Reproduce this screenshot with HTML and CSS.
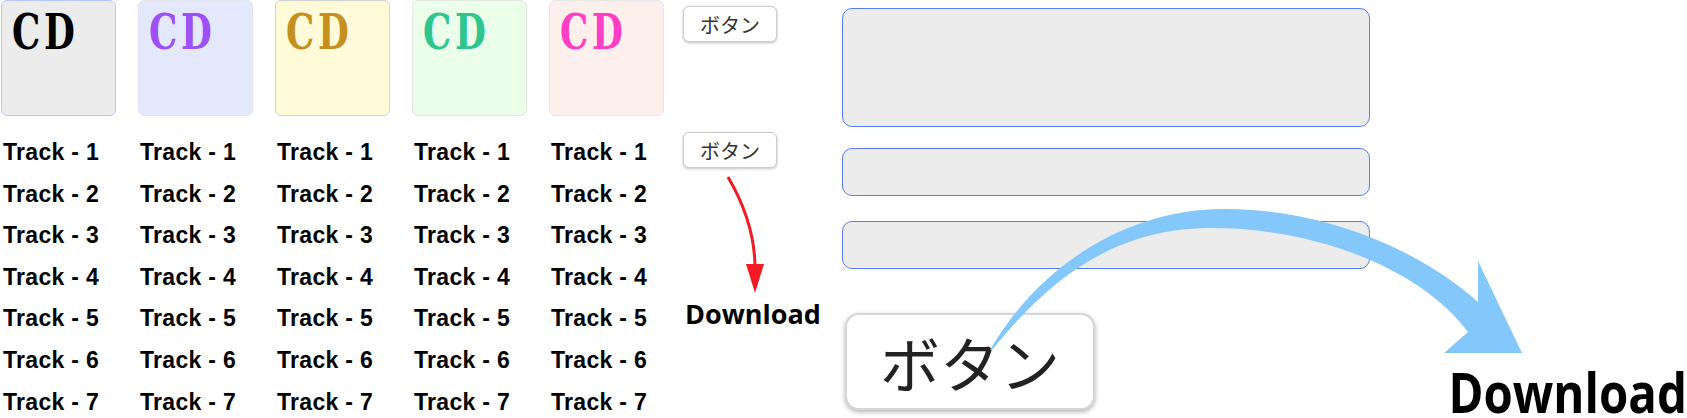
FILE: index.html
```html
<!DOCTYPE html>
<html lang="ja">
<head>
    <meta charset="UTF-8">
    <meta name="viewport" content="width=device-width, initial-scale=1.0">
    <title>CD Tracks</title>
    <link rel="stylesheet" href="styles.css">
</head>
<body>
    <div class="cd-list">
        <div class="cd">
            <div class="jacket jacket-gray"><span class="cd-label">CD</span></div>
            <ul class="tracks">
                <li>Track - 1</li><li>Track - 2</li><li>Track - 3</li><li>Track - 4</li><li>Track - 5</li><li>Track - 6</li><li>Track - 7</li>
            </ul>
        </div>
        <div class="cd">
            <div class="jacket jacket-blue"><span class="cd-label">CD</span></div>
            <ul class="tracks">
                <li>Track - 1</li><li>Track - 2</li><li>Track - 3</li><li>Track - 4</li><li>Track - 5</li><li>Track - 6</li><li>Track - 7</li>
            </ul>
        </div>
        <div class="cd">
            <div class="jacket jacket-yellow"><span class="cd-label">CD</span></div>
            <ul class="tracks">
                <li>Track - 1</li><li>Track - 2</li><li>Track - 3</li><li>Track - 4</li><li>Track - 5</li><li>Track - 6</li><li>Track - 7</li>
            </ul>
        </div>
        <div class="cd">
            <div class="jacket jacket-green"><span class="cd-label">CD</span></div>
            <ul class="tracks">
                <li>Track - 1</li><li>Track - 2</li><li>Track - 3</li><li>Track - 4</li><li>Track - 5</li><li>Track - 6</li><li>Track - 7</li>
            </ul>
        </div>
        <div class="cd">
            <div class="jacket jacket-pink"><span class="cd-label">CD</span></div>
            <ul class="tracks">
                <li>Track - 1</li><li>Track - 2</li><li>Track - 3</li><li>Track - 4</li><li>Track - 5</li><li>Track - 6</li><li>Track - 7</li>
            </ul>
        </div>
    </div>

    <div class="actions">
        <button class="btn-small">ボタン</button>
        <button class="btn-small btn-second">ボタン</button>
        <svg class="red-arrow" width="94" height="127" viewBox="0 0 94 127">
            <path d="M45,9 Q72,55 72,100" fill="none" stroke="#f21b24" stroke-width="3"/>
            <polygon points="63,96 81,96 72,125" fill="#f21b24"/>
        </svg>
        <div class="download-small">Download</div>
    </div>

    <div class="form">
        <textarea class="field field-large"></textarea>
        <textarea class="field field-mid"></textarea>
        <textarea class="field field-low"></textarea>
        <div class="form-bottom">
            <button class="btn-large">ボタン</button>
            <div class="download-large">Download</div>
        </div>
    </div>

    <!-- big curved arrow over the form -->
    <svg class="blue-arrow" width="1687" height="418" viewBox="0 0 1687 418">
        <path d="M990,350 C1035,272 1120,209 1225,209 C1325,209 1420,250 1478,302 L1478,261 L1522,353 L1444,353 L1468,332 C1420,268 1315,228 1212,228 C1120,228 1055,272 992,350 Z" fill="#84c8fb"/>
    </svg>
</body>
</html>
```

FILE: styles.css
```css
html, body {
    margin: 0;
    overflow: hidden;
}
body {
    position: relative;
    display: flex;
    align-items: flex-start;
    height: 418px;
    padding-left: 1px;
    background: #fff;
    font-family: "Liberation Sans", Arial, sans-serif;
}
.cd-list {
    display: flex;
    gap: 22px;
}
.cd {
    width: 115px;
}
.jacket {
    box-sizing: border-box;
    height: 116px;
    padding: 7px 0 0 10px;
    border: 1px solid #ddd;
    border-radius: 6px;
}
.cd-label {
    display: inline-block;
    font-family: "DejaVu Serif", "Liberation Serif", serif;
    font-weight: bold;
    font-size: 48px;
    line-height: 48px;
    letter-spacing: 5px;
    transform: scaleX(0.74);
    transform-origin: left center;
}
.jacket-gray { background: #ececec; border-color: #b8c6ff; }
.jacket-gray .cd-label { color: #000; }
.jacket-blue { background: #e3e8fc; border-color: #e4e5ef; }
.jacket-blue .cd-label { color: #9c50f6; }
.jacket-yellow { background: #fffbd9; border-color: #d2d2d2; }
.jacket-yellow .cd-label { color: #c6901f; }
.jacket-green { background: #eafeea; border-color: #e0e8e0; }
.jacket-green .cd-label { color: #2ec58f; }
.jacket-pink { background: #fcefec; border-color: #e6e6e6; }
.jacket-pink .cd-label { color: #ff3dc6; }

.tracks {
    list-style: none;
    margin: 16px 0 0;
    padding: 0 0 0 2px;
}
.tracks li {
    font-weight: bold;
    font-size: 23px;
    line-height: 41.6px;
    letter-spacing: 0.3px;
    color: #000;
    white-space: nowrap;
}

.actions {
    display: flex;
    flex-direction: column;
    align-items: flex-start;
    width: 140px;
    margin-left: 19px;
}
.btn-small {
    box-sizing: border-box;
    width: 94px;
    height: 36px;
    margin-top: 6px;
    padding: 0;
    background: #fff;
    border: 1px solid #ccc;
    border-radius: 6px;
    box-shadow: 0 1px 3px rgba(0,0,0,0.25);
    font-family: "Noto Sans CJK JP", sans-serif;
    font-size: 20px;
    color: #333;
}
.btn-second {
    margin-top: 90px;
}
.red-arrow {
    display: block;
}
.download-small {
    margin-left: 2px;
    font-family: "Open Sans", sans-serif;
    font-weight: bold;
    font-size: 27px;
    line-height: 37px;
    color: #000;
}

.form {
    flex: 1;
    margin-left: 19px;
}
.field {
    display: block;
    box-sizing: border-box;
    width: 528px;
    margin: 0;
    padding: 0;
    background: #ececec;
    border: 1px solid #5b7cf2;
    border-radius: 10px;
    resize: none;
    outline: none;
}
.field-large { height: 119px; margin-top: 8px; }
.field-mid { height: 48px; margin-top: 21px; }
.field-low { height: 48px; margin-top: 25px; }

.form-bottom {
    display: flex;
    align-items: flex-start;
    margin-top: 44px;
}
.btn-large {
    box-sizing: border-box;
    width: 250px;
    height: 97px;
    margin-left: 3px;
    padding: 0;
    background: #fff;
    border: 2px solid #d6d6d6;
    border-radius: 14px;
    box-shadow: 0 2px 5px rgba(0,0,0,0.3);
    font-family: "Noto Sans CJK JP", sans-serif;
    font-size: 60px;
    line-height: 80px;
    color: #222;
}
.download-large {
    margin-left: auto;
    margin-top: 40px;
    font-family: "Open Sans", sans-serif;
    font-weight: bold;
    font-size: 56px;
    line-height: 76px;
    color: #000;
    white-space: nowrap;
    transform: scaleX(0.846);
    transform-origin: right center;
}

.blue-arrow {
    position: absolute;
    top: 0;
    left: 0;
    pointer-events: none;
}
```
